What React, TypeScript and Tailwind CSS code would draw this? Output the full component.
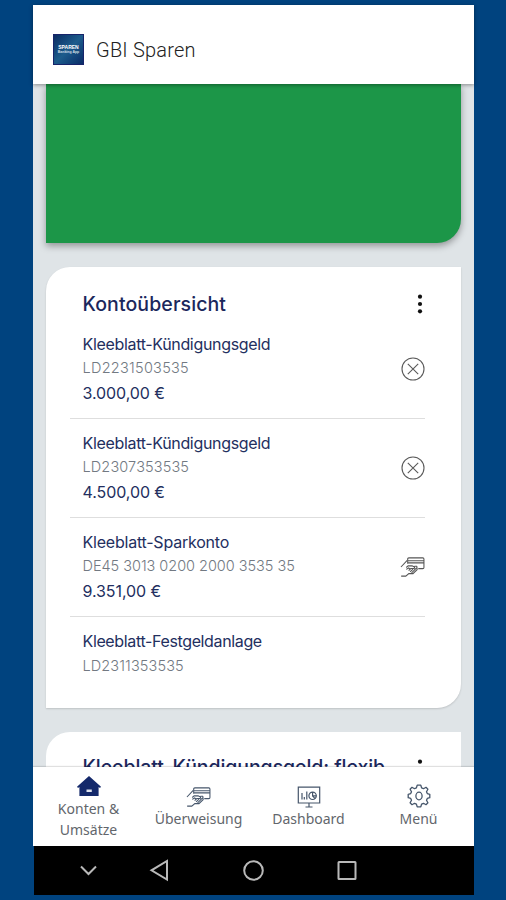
import React from "react";

const heading =
  "font-['Inter','Liberation_Sans',sans-serif] font-medium text-[19.5px] leading-6 text-[#1b275c] whitespace-nowrap";

function CardHandIcon({ className }: { className?: string }) {
  return (
    <svg viewBox="0 0 26 22" fill="none" stroke="currentColor" strokeWidth="1.1" className={className}>
      <path d="M8 7.5V2.7Q8 1.5 9.200 1.500H23.700Q24.900 1.500 24.900 2.700V11.500Q24.900 12.700 23.700 12.700H19M8.500 4.500H24.500M8.500 6.700H24.500" />
      <path d="M1 11L7.500 4.200M1.200 20.500H6L9.200 17.900H13.500L17.800 13.700Q18.400 12.200 16.800 12.300L14.500 14.500M6.500 11.500L8.500 9.800H12.500L15 11Q15.600 12.600 13.800 12.600H11.200L9 14.800M15 10.200H17.200Q18.400 11.200 17 12.300M6.500 13.500L9 12L11 13.500M10.500 16L13.500 13.300M12 17L15.500 13.800" />
    </svg>
  );
}

function CloseCircleIcon() {
  return (
    <svg viewBox="0 0 24 24" className="h-6 w-6" fill="none" stroke="#5a5a5a" strokeWidth="1.1">
      <circle cx="12" cy="12" r="11" />
      <path d="M6.800 6.800l10.400 10.400M17.200 6.800L6.800 17.200" />
    </svg>
  );
}

function Dots() {
  return (
    <svg viewBox="0 0 6 20" className="h-5 w-1.5" fill="#111">
      <circle cx="3" cy="2.7" r="2.1" />
      <circle cx="3" cy="10" r="2.1" />
      <circle cx="3" cy="17.3" r="2.1" />
    </svg>
  );
}

function HouseIcon() {
  return (
    <svg viewBox="0 0 24 20" className="h-5 w-6" fill="#14296b">
      <path d="M12 0L24 10.8L23 12L21.6 10.9V20H2.4V10.9L1 12L0 10.8Z" />
      <path d="M9.500 13.500H14.800V16H9.500Z" fill="#dfe3ee" />
    </svg>
  );
}

function DashboardIcon() {
  return (
    <svg viewBox="0 0 24 22" className="h-[22px] w-6" fill="none" stroke="#46566b" strokeWidth="1.2">
      <path d="M1.300 1.200H22.700V17H1.300ZM12 17V21M8.500 21H15.500M5 7V13.500M7.300 11V13.500M9.800 5.500V13.500" />
      <circle cx="15.600" cy="9.800" r="3.700" />
      <path d="M15.600 6V9.800H19.300M15.600 9.800L18 12.600" />
    </svg>
  );
}

function GearIcon() {
  return (
    <svg viewBox="0 0 24 24" className="h-6 w-6" fill="none" stroke="#46566b" strokeWidth="1.3" strokeLinejoin="round">
      <path d="M10.2 1.2H13.8L14.6 3.9L16.5 4.7L19 3.3L20.9 5.2L19.5 7.7L20.3 9.6L22.8 10.3V13.7L20.3 14.4L19.5 16.3L20.9 18.8L19 20.7L16.5 19.3L14.6 20.1L13.8 22.8H10.2L9.4 20.1L7.5 19.3L5 20.7L3.1 18.8L4.5 16.3L3.7 14.4L1.2 13.7V10.3L3.7 9.6L4.5 7.7L3.1 5.2L5 3.3L7.5 4.7L9.4 3.9Z" />
      <ellipse cx="12" cy="12" rx="3.1" ry="3.800" />
    </svg>
  );
}

type Account = {
  name: string;
  nameClass: string;
  id: string;
  idClass: string;
  amount?: string;
  icon?: "close" | "transfer";
};

const accounts: Account[] = [
  { name: "Kleeblatt-Kündigungsgeld", nameClass: "tracking-[-0.33px]", id: "LD2231503535", idClass: "tracking-[0.27px]", amount: "3.000,00 €", icon: "close" },
  { name: "Kleeblatt-Kündigungsgeld", nameClass: "tracking-[-0.33px]", id: "LD2307353535", idClass: "tracking-[0.13px]", amount: "4.500,00 €", icon: "close" },
  { name: "Kleeblatt-Sparkonto", nameClass: "tracking-[-0.22px]", id: "DE45 3013 0200 2000 3535 35", idClass: "tracking-[-0.03px]", amount: "9.351,00 €", icon: "transfer" },
  { name: "Kleeblatt-Festgeldanlage", nameClass: "tracking-[-0.36px]", id: "LD2311353535", idClass: "tracking-[0.12px]" },
];

function AccountRow({ account, last }: { account: Account; last: boolean }) {
  return (
    <li className={"flex h-[99px] items-center justify-between pl-[12.5px] " + (last ? "" : "border-b border-[#dedede]")}>
      <div className="h-[75px] font-['Inter','Liberation_Sans',sans-serif] leading-[24.5px] whitespace-nowrap">
        <p className={"text-[16px] text-[#232f60] " + account.nameClass}>{account.name}</p>
        <p className={"text-[14.5px] font-light text-[#727982] " + account.idClass}>{account.id}</p>
        {account.amount && <p className="text-[16px] tracking-[-0.08px] text-[#232f60]">{account.amount}</p>}
      </div>
      {account.icon === "close" && <CloseCircleIcon />}
      {account.icon === "transfer" && <CardHandIcon className="h-[22px] w-[25px] text-[#555]" />}
    </li>
  );
}

function NavItem({ children, label, className }: { children: React.ReactNode; label: React.ReactNode; className: string }) {
  return (
    <div className={"flex w-[110px] flex-col items-center text-center font-['Noto_Sans',sans-serif] text-[14px] leading-[21px] text-[#62666c] " + className}>
      {children}
      <span className="whitespace-nowrap">{label}</span>
    </div>
  );
}

export default function App() {
  return (
    <div className="h-[900px] w-[506px] overflow-hidden bg-[#00437f] pt-[5px] pl-[33px]">
      <div className="flex h-[890px] w-[441px] flex-col">
        <header className="z-10 flex h-[79px] shrink-0 items-center bg-white pt-[10px] pl-5 shadow-[0_1px_4px_rgba(0,0,0,0.4)]">
          <div className="flex h-[31px] w-[31px] flex-col items-center justify-center overflow-hidden border border-[#17246a] bg-linear-to-br from-[#0b2c63] via-[#1d5c8c] to-[#0b2c68] font-['Liberation_Sans',sans-serif] font-bold text-white">
            <span className="text-[5px] leading-[5px]">SPAREN</span>
            <span className="text-[3.5px] leading-[4px] opacity-80">Banking App</span>
          </div>
          <h1 className="ml-3 pt-px font-['Roboto',sans-serif] text-[20px] font-light tracking-[0.2px] text-[#222]">GBI Sparen</h1>
        </header>

        <main className="flex h-[683px] shrink-0 flex-col overflow-hidden bg-[#dfe4e7] pl-[13px]">
          <div className="h-[159px] w-[415px] shrink-0 rounded-br-[24px] bg-[#1c9648] shadow-[0_3px_7px_rgba(0,0,0,0.35)]" />

          <section className="mt-6 h-[441px] w-[415px] shrink-0 rounded-tl-[24px] rounded-br-[24px] bg-white pr-9 pl-6 shadow-[0_1px_2px_rgba(0,0,0,0.15)]">
            <div className="flex h-[53px] items-center justify-between pt-5 pr-0.5 pl-[12.5px]">
              <h2 className={heading + " tracking-[0.1px]"}>Kontoübersicht</h2>
              <Dots />
            </div>
            <ul>
              {accounts.map((a, i) => (
                <AccountRow key={a.id} account={a} last={i === accounts.length - 1} />
              ))}
            </ul>
          </section>

          <section className="mt-6 h-[120px] w-[415px] shrink-0 rounded-tl-[24px] bg-white pr-9 pl-6">
            <div className="flex h-[53px] items-start justify-between pt-[23px] pr-0.5 pl-[12.5px]">
              <h2 className={heading + " tracking-[-0.07px]"}>Kleeblatt-Kündigungsgeld: flexib</h2>
              <div className="pt-1">
                <Dots />
              </div>
            </div>
          </section>
        </main>

        <nav className="z-10 flex h-[79px] shrink-0 bg-white shadow-[0_-1px_1px_rgba(0,0,0,0.12)]">
          <NavItem className="gap-[2px] pt-[9px] pl-px" label={<>Konten &amp;<br />Umsätze</>}>
            <HouseIcon />
          </NavItem>
          <NavItem className="pt-[19px] pl-px" label="Überweisung">
            <CardHandIcon className="h-[22px] w-[25px] text-[#46566b]" />
          </NavItem>
          <NavItem className="pt-[19px] pl-px" label="Dashboard">
            <DashboardIcon />
          </NavItem>
          <NavItem className="pt-[17px] pl-px" label="Menü">
            <GearIcon />
          </NavItem>
        </nav>

        <footer className="ml-px h-[49px] shrink-0 bg-black">
          <svg viewBox="0 0 440 49" className="h-[49px] w-[440px]" fill="none" stroke="#b9b9b9" strokeWidth="2">
            <path d="M47 20.500L54.500 28L62 20.500" />
            <path d="M133 15V33.500L117.500 24.300Z" />
            <circle cx="219.500" cy="24.500" r="9.300" />
            <rect x="304.500" y="16" width="17" height="17" rx="0.500" />
          </svg>
        </footer>
      </div>
    </div>
  );
}
